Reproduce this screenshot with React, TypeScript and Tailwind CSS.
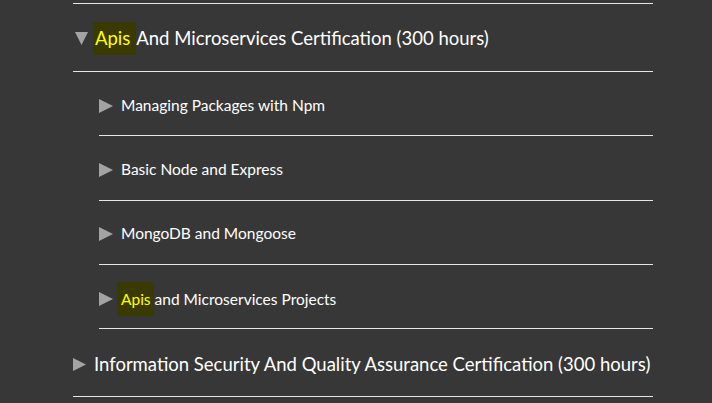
import React from 'react';

type Sub = { hl?: string; text: string };

const SUBS: Sub[] = [
  { text: 'Managing Packages with Npm' },
  { text: 'Basic Node and Express' },
  { text: 'MongoDB and Mongoose' },
  { hl: 'Apis', text: 'and Microservices Projects' },
];

const Right = ({ size }: { size: 'lg' | 'sm' }) => (
  <svg
    width={size === 'lg' ? 13 : 14}
    height={size === 'lg' ? 13 : 14}
    viewBox="0 0 14 14"
    className="shrink-0 fill-[#a3a3a3]"
  >
    <path d="M0 0 L14 7 L0 14 Z" />
  </svg>
);

const Down = () => (
  <svg width={13} height={13} viewBox="0 0 14 14" className="shrink-0 fill-[#a3a3a3]">
    <path d="M0 0 L14 0 L7 14 Z" />
  </svg>
);

export default function App() {
  return (
    <div className="min-h-[403px] w-full bg-[#373737] pt-[3px] font-['Lato','Open_Sans',sans-serif] text-white overflow-hidden">
      <div className="ml-[73px] w-[580px]">
        <div className="border-t border-[#e6e6e6]" />

        <div className="flex h-[68px] items-center border-b border-[#e6e6e6] pl-[2px] pt-[1px]">
          <Down />
          <span className="ml-[5px] whitespace-nowrap text-[18.5px] leading-none">
            <span className="inline-block h-[33px] bg-[#3a3a00] pl-[2px] pr-[6px] leading-[33px] text-[#ffff00]">
              Apis
            </span>
            And Microservices Certification (300 hours)
          </span>
        </div>

        <div className="ml-[26px]">
          {SUBS.map((s, i) => (
            <div
              key={i}
              className="flex h-[64.3px] items-center border-b border-[#e6e6e6] pt-[4px]"
            >
              <Right size="sm" />
              <span className="ml-[8px] whitespace-nowrap text-[15.5px] leading-none">
                {s.hl && (
                  <span className="-ml-[4px] mr-[1px] inline-block h-[34px] bg-[#3a3a00] pl-[4px] pr-[3px] leading-[34px] text-[#ffff00]">
                    {s.hl}
                  </span>
                )}
                {s.text}
              </span>
            </div>
          ))}
        </div>

        <div className="flex h-[68px] items-center border-b border-[#e6e6e6] pt-[3px]">
          <Right size="lg" />
          <span className="ml-[8px] whitespace-nowrap text-[18.5px] leading-none">
            Information Security And Quality Assurance Certification (300 hours)
          </span>
        </div>
      </div>
    </div>
  );
}
